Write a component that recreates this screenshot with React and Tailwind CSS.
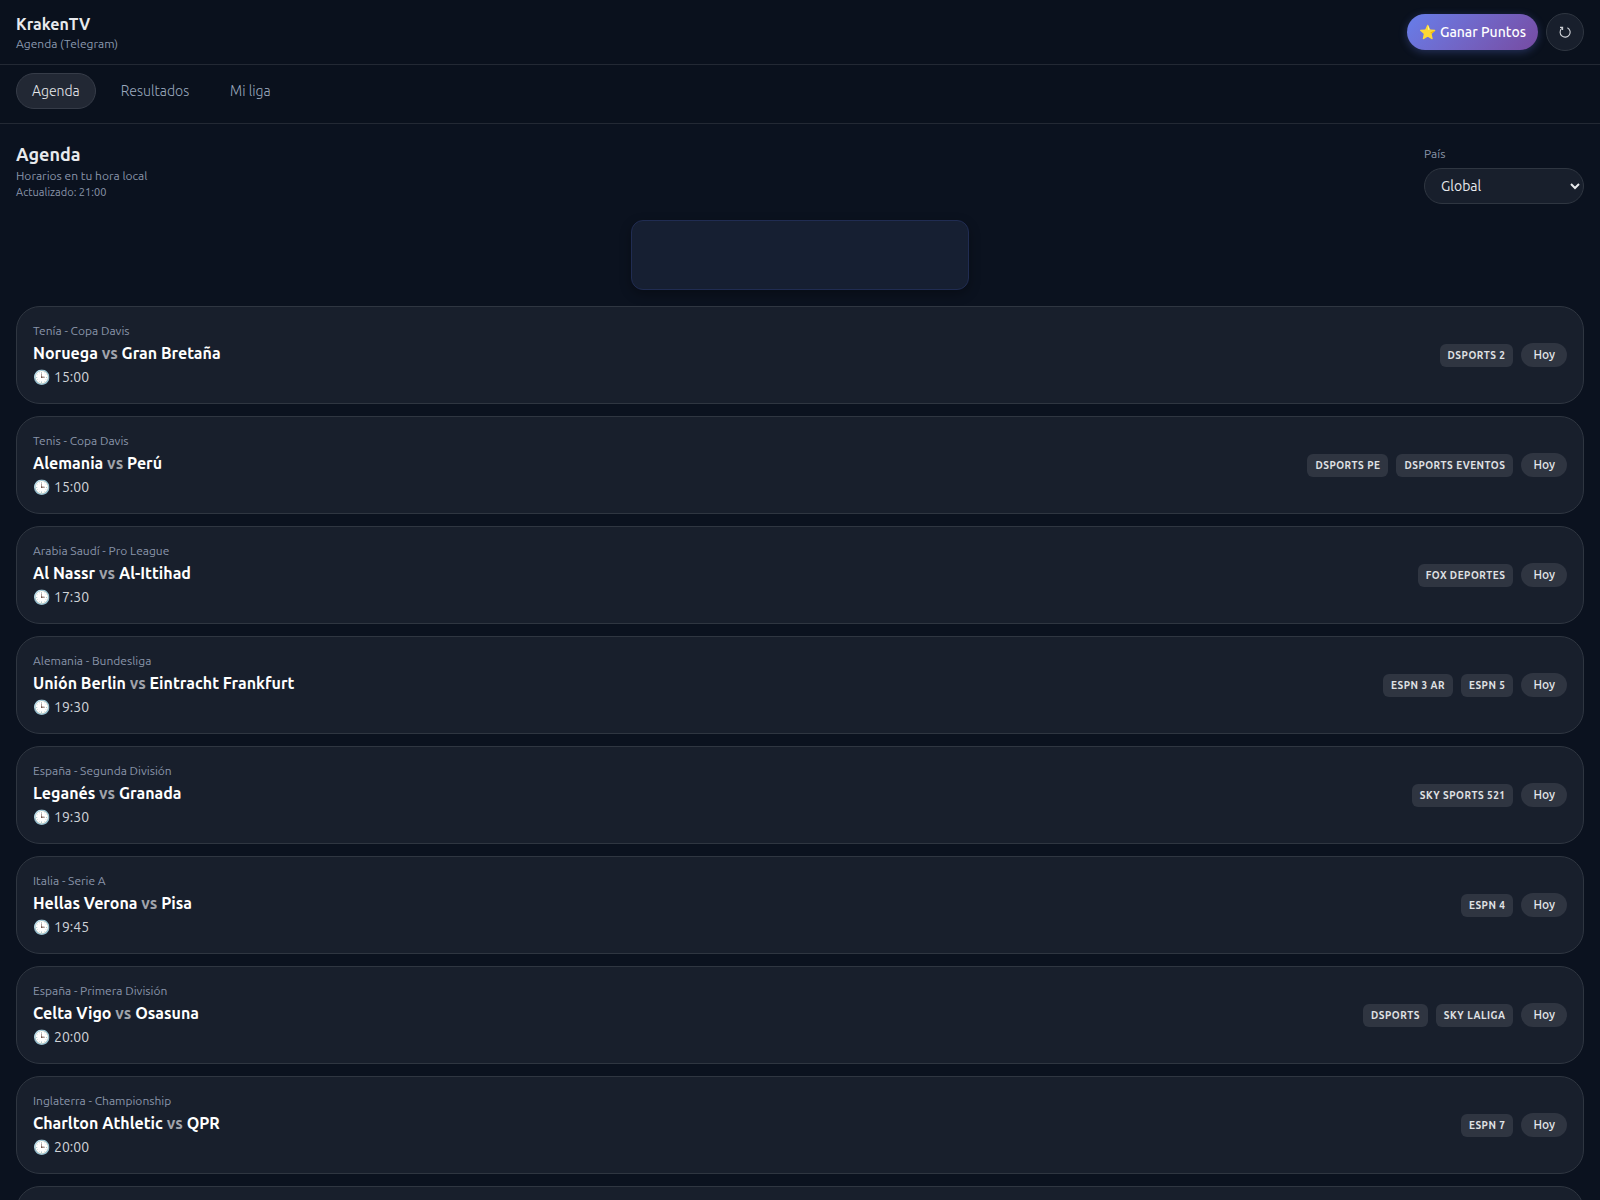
import { useState } from "react";

const tabs = ["Agenda", "Resultados", "Mi liga"];

const matches = [
  { league: "Tenía - Copa Davis", home: "Noruega", away: "Gran Bretaña", time: "15:00", channels: ["DSPORTS 2"] },
  { league: "Tenis - Copa Davis", home: "Alemania", away: "Perú", time: "15:00", channels: ["DSPORTS PE", "DSPORTS EVENTOS"] },
  { league: "Arabia Saudí - Pro League", home: "Al Nassr", away: "Al-Ittihad", time: "17:30", channels: ["FOX DEPORTES"] },
  { league: "Alemania - Bundesliga", home: "Unión Berlin", away: "Eintracht Frankfurt", time: "19:30", channels: ["ESPN 3 AR", "ESPN 5"] },
  { league: "España - Segunda División", home: "Leganés", away: "Granada", time: "19:30", channels: ["SKY SPORTS 521"] },
  { league: "Italia - Serie A", home: "Hellas Verona", away: "Pisa", time: "19:45", channels: ["ESPN 4"] },
  { league: "España - Primera División", home: "Celta Vigo", away: "Osasuna", time: "20:00", channels: ["DSPORTS", "SKY LALIGA"] },
  { league: "Inglaterra - Championship", home: "Charlton Athletic", away: "QPR", time: "20:00", channels: ["ESPN 7"] },
];

const cardClass = "min-h-[98px] shrink-0 rounded-3xl border border-[#2f3641] bg-[#181f2c] p-4";

function RefreshIcon() {
  return (
    <svg viewBox="0 0 12 12" className="size-3" fill="none" stroke="#d0d3d8" strokeWidth="1.1">
      <path d="M8.4 1.7A5 5 0 1 1 2.8 2.4" />
      <path d="M1 1.4h2.6v2.6" />
    </svg>
  );
}

function MatchCard({ match }) {
  return (
    <li className={`${cardClass} flex items-center justify-between gap-4`}>
      <div className="h-16">
        <p className="text-xs leading-4 text-[#8a95aa]">{match.league}</p>
        <h3 className="mt-1 text-base leading-5 font-semibold text-white">
          {match.home} <span className="text-[#a0a3ab]">vs</span> {match.away}
        </h3>
        <p className="mt-1 flex gap-1 text-sm leading-5 text-[#d0d3d8]">
          <span>🕒</span>
          {match.time}
        </p>
      </div>
      <div className="flex items-center gap-2">
        {match.channels.map((channel) => (
          <span
            key={channel}
            className="rounded-md bg-[#2f3541] px-2 py-1 text-[10px] leading-[15px] font-bold tracking-wider text-[#e0e2e5]"
          >
            {channel}
          </span>
        ))}
        <span className="rounded-full bg-[#2f3541] px-3 py-1 text-xs leading-4 font-medium text-[#e6e8eb]">Hoy</span>
      </div>
    </li>
  );
}

export default function App() {
  const [activeTab, setActiveTab] = useState("Agenda");
  const [country, setCountry] = useState("global");

  return (
    <div className="flex h-screen flex-col overflow-hidden bg-[#0b121f] font-[Ubuntu,'Noto_Sans',sans-serif] text-[#e8eaed]">
      <header className="flex h-[65px] shrink-0 items-center justify-between border-b border-[#232934] bg-[#0a111d] px-4">
        <div className="pt-1">
          <h1 className="text-base leading-5 font-semibold">KrakenTV</h1>
          <p className="text-xs leading-5 text-[#8a99ae]">Agenda (Telegram)</p>
        </div>
        <div className="flex items-center gap-2">
          <button
            type="button"
            className="flex h-9 items-center gap-1 rounded-full bg-linear-135 from-[#667eea] to-[#764ba2] px-3 text-sm font-medium text-white shadow-[0_2px_8px_rgba(102,126,234,0.3)]"
          >
            <span>⭐</span>
            Ganar Puntos
          </button>
          <button
            type="button"
            aria-label="Actualizar"
            className="flex size-[38px] items-center justify-center rounded-full border border-[#2f3641] bg-[#181f2c]"
          >
            <RefreshIcon />
          </button>
        </div>
      </header>

      <nav className="flex h-[59px] shrink-0 items-start gap-[9px] border-b border-[#232934] bg-[#0a111d] px-4 pt-2">
        {tabs.map((tab) => (
          <button
            key={tab}
            type="button"
            onClick={() => setActiveTab(tab)}
            className={`h-9 rounded-full border px-[15px] text-sm font-light ${
              activeTab === tab
                ? "border-[#363c48] bg-[#222834] text-[#e8eaed]"
                : "border-transparent text-[#9caabf]"
            }`}
          >
            {tab}
          </button>
        ))}
      </nav>

      <main className="flex min-h-0 flex-col px-4 pt-4">
        <div className="flex h-16 shrink-0 items-start justify-between">
          <div>
            <h2 className="text-lg leading-7 font-semibold">Agenda</h2>
            <p className="text-xs leading-4 text-[#8a95aa]">Horarios en tu hora local</p>
            <p className="text-[11px] leading-4 text-[#8a95aa]">Actualizado: 21:00</p>
          </div>
          <div className="flex w-40 flex-col">
            <label htmlFor="country" className="pt-1 pb-1 text-xs leading-5 text-[#8a95aa]">
              País
            </label>
            <select
              id="country"
              value={country}
              onChange={(e) => setCountry(e.target.value)}
              className="h-9 w-full rounded-full border border-[#2f3641] bg-[#181f2c] px-3 text-sm"
            >
              <option value="global">Global</option>
            </select>
          </div>
        </div>

        {/* Ad slot */}
        <div className="mx-auto mt-4 h-[70px] w-full max-w-[338px] shrink-0 rounded-xl border border-[#202c52] bg-[#161f32] shadow-[0_4px_12px_rgba(0,0,0,0.3)]" />

        <ul className="mt-4 flex flex-col gap-3">
          {matches.map((match) => (
            <MatchCard key={match.home} match={match} />
          ))}
          <li className={cardClass} />
        </ul>
      </main>
    </div>
  );
}
